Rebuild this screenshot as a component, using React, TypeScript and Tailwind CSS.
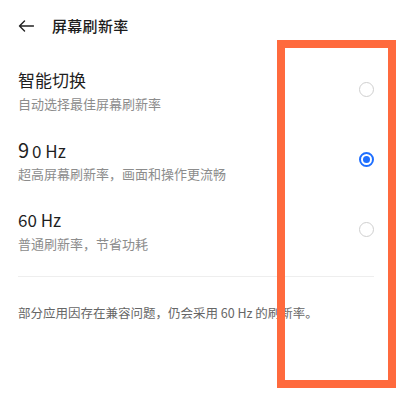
import { useState } from "react";

interface RateOption {
  id: string;
  title: string;
  desc: string;
}

const OPTIONS: RateOption[] = [
  { id: "auto", title: "智能切换", desc: "自动选择最佳屏幕刷新率" },
  { id: "90", title: "90 Hz", desc: "超高屏幕刷新率，画面和操作更流畅" },
  { id: "60", title: "60 Hz", desc: "普通刷新率，节省功耗" },
];

const FONT = {
  fontFamily: '"Noto Sans CJK SC", "Noto Sans", sans-serif',
};

function Radio({ checked }: { checked: boolean }) {
  if (checked) {
    return (
      <div className="mb-[4px] w-[15px] h-[15px] rounded-full border-[2px] border-[#1f6fff] flex items-center justify-center">
        <div className="w-[7px] h-[7px] rounded-full bg-[#1f6fff]" />
      </div>
    );
  }
  return (
    <div className="mb-[4px] w-[15px] h-[15px] rounded-full border-[1.5px] border-[#cfcfcf]" />
  );
}

function OptionTitle({ title }: { title: string }) {
  // the 9 renders a bit larger in the source
  if (title === "90 Hz") {
    return (
      <span className="flex items-baseline">
        <span className="text-[20px] leading-[22px] mr-[3px]">9</span>
        <span>0 Hz</span>
      </span>
    );
  }
  return <span>{title}</span>;
}

export default function App() {
  const [selected, setSelected] = useState("90");

  return (
    <div
      className="relative w-[409px] h-[401px] bg-white overflow-hidden"
      style={FONT}
    >
      {/* Header */}
      <div className="h-[52px] flex items-center pl-[18px]">
        <svg width="16" height="12" viewBox="0 0 16 12" fill="none">
          <path
            d="M15.5 6H1.5M6.5 1L1.5 6L6.5 11"
            stroke="#222"
            strokeWidth="1.4"
            strokeLinecap="round"
            strokeLinejoin="round"
          />
        </svg>
        <span className="ml-[18px] text-[15px] font-medium text-[#1c1c1c] tracking-[0.3px]">
          屏幕刷新率
        </span>
      </div>

      {/* Options */}
      <div className="pt-[4px] pl-[18px] pr-[35px]">
        {OPTIONS.map((opt) => (
          <button
            key={opt.id}
            onClick={() => setSelected(opt.id)}
            className="w-full flex items-center justify-between py-[13px] text-left cursor-pointer"
          >
            <div>
              <div className="h-[22px] flex items-center text-[17px] leading-[22px] text-[#1f1f1f]">
                <OptionTitle title={opt.title} />
              </div>
              <div className="mt-[4px] text-[13px] leading-[18px] text-[#8c8c8c]">
                {opt.desc}
              </div>
            </div>
            <Radio checked={selected === opt.id} />
          </button>
        ))}

        <div className="mt-[10px] h-px bg-[#eeeeee]" />

        <p className="pt-[27px] text-[12.5px] leading-[18px] text-[#666666]">
          部分应用因存在兼容问题，仍会采用 60 Hz 的刷新率。
        </p>
      </div>

      {/* Highlight frame overlay */}
      <div className="absolute left-[277px] top-[40px] w-[119px] h-[348px] border-[8px] border-[#ff6a3d] pointer-events-none" />
    </div>
  );
}
